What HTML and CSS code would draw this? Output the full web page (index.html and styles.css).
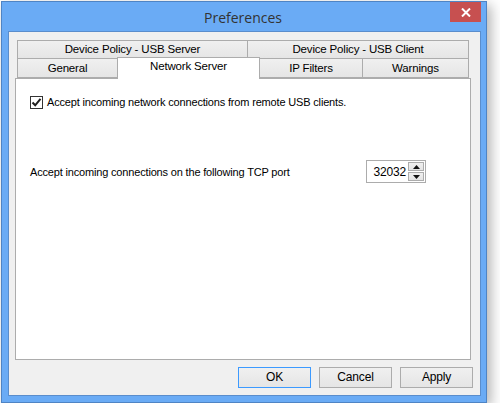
FILE: index.html
```html
<!DOCTYPE html>
<html>
<head>
<meta charset="utf-8">
<link rel="stylesheet" href="styles.css">
</head>
<body>
<div class="window">
  <div class="titlebar">
    <span class="title">Preferences</span>
    <div class="close"><svg width="10" height="9" viewBox="0 0 10 9"><path d="M1 0.5 L9 8.5 M9 0.5 L1 8.5" stroke="#fff" stroke-width="2"/></svg></div>
  </div>
  <div class="client">
    <div class="tabs">
      <div class="tabrow row1">
        <div class="tab t-server">Device Policy - USB Server</div>
        <div class="tab t-client">Device Policy - USB Client</div>
      </div>
      <div class="tabrow row2">
        <div class="tab t-general">General</div>
        <div class="tab t-net selected">Network Server</div>
        <div class="tab t-ip">IP Filters</div>
        <div class="tab t-warn">Warnings</div>
      </div>
      <div class="panel">
        <label class="check-row">
          <span class="checkbox"><svg width="11" height="11" viewBox="0 0 11 11"><path d="M1.5 5.5 L4.2 8.3 L9.5 1.8" fill="none" stroke="#1e1e1e" stroke-width="2"/></svg></span>
          <span>Accept incoming network connections from remote USB clients.</span>
        </label>
        <div class="port-row">
          <span class="port-label">Accept incoming connections on the following TCP port</span>
          <div class="spin">
            <span class="spin-value">32032</span>
            <div class="spin-btns">
              <div class="spin-btn"><svg width="7" height="4" viewBox="0 0 7 4"><path d="M0 4 L3.5 0 L7 4 Z" fill="#111"/></svg></div>
              <div class="spin-btn"><svg width="7" height="4" viewBox="0 0 7 4"><path d="M0 0 L3.5 4 L7 0 Z" fill="#111"/></svg></div>
            </div>
          </div>
        </div>
      </div>
    </div>
    <div class="buttons">
      <div class="btn default">OK</div>
      <div class="btn">Cancel</div>
      <div class="btn">Apply</div>
    </div>
  </div>
</div>
</body>
</html>
```

FILE: styles.css
```css
html, body {
  margin: 0;
  padding: 0;
  background: #ffffff;
}
body {
  padding: 1px 0 0 1px;
  font-family: "Liberation Sans", Arial, sans-serif;
  font-size: 11px;
  letter-spacing: -0.17px;
  color: #000;
}
.window {
  width: 486px;
  height: 402px;
  box-sizing: border-box;
  border: 1px solid #4f84c4;
  background: #6aabf5;
  display: flex;
  flex-direction: column;
  box-shadow: 4px 4px 12px rgba(0, 0, 0, 0.3);
}
.titlebar {
  height: 29px;
  position: relative;
  display: flex;
  align-items: center;
  justify-content: center;
}
.title {
  font-family: "Open Sans", "Noto Sans", sans-serif;
  font-size: 14px;
  letter-spacing: 0;
  color: #333333;
  margin-top: 2px;
  margin-left: -2px;
}
.close {
  position: absolute;
  top: 0;
  right: 5px;
  width: 31px;
  height: 20px;
  background: #c75050;
  display: flex;
  align-items: center;
  justify-content: center;
}
.client {
  flex: 1;
  margin: 0 5px 6px 6px;
  border: 1px solid #5a8dcc;
  background: #f0f0f0;
  display: flex;
  flex-direction: column;
}
.tabs {
  padding: 8px 0 0 6px;
}
.tabrow {
  display: flex;
  margin-left: 2px;
}
.tab {
  box-sizing: border-box;
  border: 1px solid #acacac;
  background: linear-gradient(#f0f0f0, #e5e5e5);
  text-align: center;
  color: #000;
  font-size: 11.5px;
}
.tab + .tab {
  margin-left: -1px;
}
.row1 .tab {
  height: 19px;
  line-height: 17px;
}
.row2 {
  margin-top: -1px;
  position: relative;
  z-index: 1;
}
.row2 .tab {
  height: 20px;
  line-height: 19px;
}
.t-server { width: 231px; }
.t-client { width: 222px; }
.t-general { width: 101px; }
.t-net { width: 143px; }
.t-ip { width: 104px; }
.t-warn { width: 107px; }
.row2 .tab.selected {
  background: #ffffff;
  border-bottom: none;
  height: 22px;
  margin-top: -1px;
  line-height: 17px;
  position: relative;
  z-index: 2;
}
.panel {
  width: 456px;
  height: 282px;
  box-sizing: border-box;
  margin-top: -1px;
  border: 1px solid #acacac;
  background: #ffffff;
  padding: 16px 0 0 14px;
}
.check-row {
  display: flex;
  align-items: center;
  gap: 4px;
  height: 14px;
}
.checkbox {
  width: 13px;
  height: 13px;
  box-sizing: border-box;
  border: 1px solid #333333;
  background: #ffffff;
  display: flex;
  align-items: center;
  justify-content: center;
}
.port-row {
  display: flex;
  align-items: center;
  margin-top: 51px;
}
.port-label {
  flex: 0 0 336px;
}
.spin {
  width: 60px;
  height: 23px;
  box-sizing: border-box;
  border: 1px solid #acacac;
  background: #ffffff;
  display: flex;
  align-items: center;
  justify-content: flex-end;
  padding-right: 1px;
}
.spin-value {
  font-size: 12px;
  margin-right: 2px;
  margin-top: 1px;
}
.spin-btns {
  display: flex;
  flex-direction: column;
  gap: 1px;
}
.spin-btn {
  width: 16px;
  height: 9px;
  box-sizing: border-box;
  border: 1px solid #acacac;
  background: linear-gradient(#f0f0f0, #e3e3e3);
  display: flex;
  align-items: center;
  justify-content: center;
}
.buttons {
  display: flex;
  justify-content: flex-end;
  gap: 8px;
  padding: 7px 7px 0 0;
}
.btn {
  width: 73px;
  height: 21px;
  box-sizing: border-box;
  border: 1px solid #acacac;
  background: linear-gradient(#f0f0f0, #e5e5e5);
  text-align: center;
  line-height: 19px;
  font-size: 12px;
}
.btn.default {
  border-color: #3c9aff;
}
```
